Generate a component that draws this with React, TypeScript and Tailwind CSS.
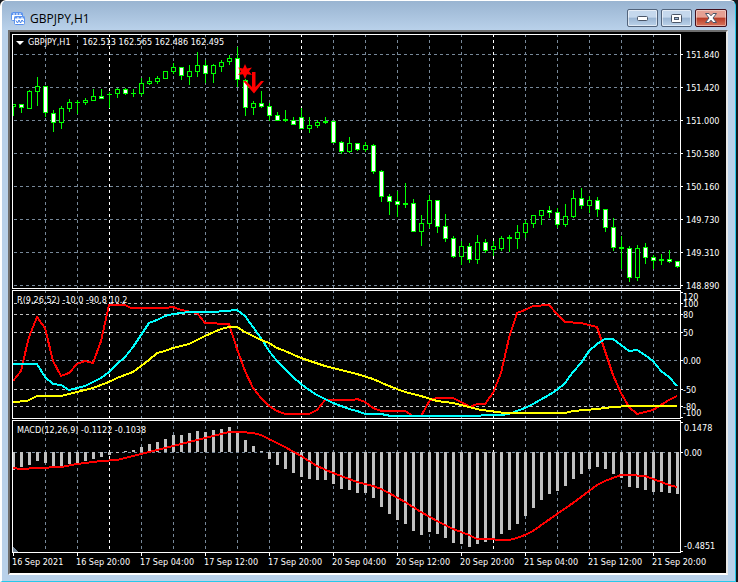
import type { ReactNode } from "react";

// high, body top, body bottom, low, 1 = bearish (filled)
type Candle = [number, number, number, number, number];
type Point = [number, number];

const FIRST_X = 13;
const STEP = 8;
const barX = (i: number) => FIRST_X + i * STEP;

const candles: Candle[] = [
  [104, 104, 106, 115, 0], [104, 104, 107, 112, 1], [90, 91, 108, 108, 0], [77, 86, 91, 105, 0],
  [86, 86, 112, 116, 1], [110, 113, 122, 131, 1], [106, 108, 122, 128, 0], [99, 102, 108, 111, 0],
  [100, 102, 102, 113, 0], [98, 100, 102, 104, 0], [89, 96, 100, 100, 0], [89, 96, 98, 98, 1],
  [92, 94, 94, 107, 0], [88, 89, 93, 97, 0], [88, 89, 93, 94, 1], [89, 93, 93, 96, 0],
  [78, 83, 93, 95, 0], [77, 81, 83, 84, 0], [76, 78, 81, 83, 0], [71, 71, 78, 78, 0],
  [63, 67, 71, 73, 0], [67, 67, 75, 79, 1], [65, 71, 76, 84, 0], [52, 65, 71, 76, 0],
  [60, 65, 73, 82, 1], [64, 65, 73, 82, 0], [60, 62, 66, 71, 0], [55, 58, 61, 64, 0],
  [47, 58, 79, 86, 1], [79, 80, 107, 115, 1], [101, 103, 107, 114, 0], [91, 103, 106, 107, 1],
  [103, 106, 115, 120, 1], [112, 115, 120, 120, 1], [110, 119, 120, 121, 0], [117, 120, 124, 124, 1],
  [108, 117, 128, 128, 1], [117, 125, 128, 132, 0], [120, 122, 125, 127, 0], [117, 121, 122, 123, 0],
  [121, 121, 142, 142, 1], [141, 142, 151, 153, 1], [137, 143, 151, 152, 0], [143, 143, 149, 150, 1],
  [142, 145, 149, 151, 0], [144, 145, 171, 173, 1], [170, 171, 196, 201, 1], [194, 196, 201, 214, 1],
  [191, 201, 204, 216, 1], [183, 203, 204, 207, 0], [199, 203, 231, 231, 1], [215, 223, 231, 245, 0],
  [195, 200, 223, 227, 0], [200, 200, 226, 232, 1], [214, 226, 238, 241, 1], [236, 238, 256, 257, 1],
  [241, 246, 256, 264, 0], [243, 246, 259, 262, 1], [235, 242, 259, 263, 0], [239, 242, 250, 252, 1],
  [241, 246, 249, 255, 0], [236, 238, 248, 250, 0], [235, 237, 238, 251, 0], [225, 232, 238, 248, 0],
  [220, 223, 232, 237, 0], [215, 215, 223, 227, 0], [210, 210, 215, 224, 0], [206, 210, 212, 217, 1],
  [208, 212, 224, 227, 1], [204, 216, 224, 226, 0], [190, 198, 216, 217, 0], [188, 198, 205, 208, 1],
  [196, 200, 205, 212, 0], [197, 200, 209, 216, 1], [209, 209, 227, 231, 1], [218, 227, 247, 250, 1],
  [236, 247, 248, 268, 0], [246, 248, 277, 281, 1], [245, 248, 277, 280, 0], [243, 247, 257, 263, 1],
  [255, 257, 260, 268, 1], [254, 259, 260, 264, 0], [250, 259, 261, 262, 1], [261, 261, 266, 267, 1],
];

const fastR: Point[] = [
  [13, 381], [21, 371], [23, 362], [29, 337], [37, 317], [45, 328], [53, 361], [61, 376], [69, 373],
  [77, 364], [85, 361], [93, 363], [101, 341], [109, 305], [125, 305], [131, 308], [165, 308], [173, 307],
  [181, 310], [197, 313], [205, 323], [229, 324], [237, 349], [245, 371], [253, 388], [261, 398],
  [269, 406], [277, 411], [285, 414], [309, 414], [317, 410], [325, 400], [353, 400], [357, 399],
  [365, 402], [373, 408], [381, 411], [405, 411], [413, 416], [421, 416], [430, 400], [437, 398],
  [453, 398], [461, 402], [470, 407], [477, 404], [485, 404], [493, 393], [501, 373], [509, 338],
  [517, 313], [525, 310], [533, 306], [549, 305], [557, 314], [565, 322], [581, 323], [597, 327],
  [605, 351], [613, 375], [621, 393], [629, 407], [637, 414], [645, 412], [653, 410], [661, 405],
  [669, 400], [677, 396],
];

const midR: Point[] = [
  [13, 364], [37, 364], [45, 377], [53, 384], [61, 385], [69, 390], [77, 388], [85, 386], [93, 382],
  [101, 378], [109, 372], [117, 364], [125, 357], [133, 347], [141, 335], [149, 323], [157, 320],
  [165, 316], [173, 314], [189, 312], [213, 312], [237, 310], [245, 316], [253, 327], [261, 338],
  [269, 351], [277, 361], [285, 369], [293, 377], [301, 384], [309, 390], [317, 395], [325, 399],
  [333, 403], [341, 406], [349, 409], [357, 411], [365, 414], [381, 414], [391, 416], [477, 416],
  [485, 415], [501, 415], [509, 414], [517, 411], [525, 408], [533, 404], [549, 395], [557, 390],
  [565, 383], [573, 372], [581, 363], [589, 351], [597, 344], [605, 339], [613, 339], [621, 345],
  [629, 351], [637, 350], [645, 355], [653, 361], [661, 371], [669, 377], [677, 386],
];

const slowR: Point[] = [
  [13, 402], [27, 401], [37, 396], [61, 396], [77, 392], [93, 388], [101, 385], [109, 382], [117, 378],
  [133, 372], [141, 366], [149, 360], [157, 353], [165, 351], [173, 348], [189, 344], [205, 336],
  [221, 329], [229, 327], [237, 327], [245, 332], [261, 340], [269, 343], [277, 348], [285, 351],
  [301, 358], [325, 366], [357, 374], [373, 379], [389, 386], [405, 392], [421, 396], [437, 401],
  [453, 403], [469, 407], [481, 410], [490, 411], [505, 413], [565, 413], [573, 411], [597, 409],
  [613, 407], [629, 406], [677, 406],
];

const MACD_ZERO = 452;
const macd = [
  470, 467, 465, 461, 463, 466, 466, 464, 463, 461, 459, 457, 455, 453, 451, 450, 447, 444, 442, 439, 435,
  435, 433, 431, 432, 430, 429, 427, 432, 440, 446, 451, 459, 465, 469, 473, 477, 479, 480, 480, 484, 489,
  490, 493, 493, 498, 507, 514, 520, 524, 531, 535, 532, 534, 538, 543, 544, 547, 544, 542, 539, 534, 530,
  524, 516, 508, 500, 494, 491, 486, 479, 474, 469, 467, 469, 474, 478, 487, 488, 490, 492, 492, 493, 494,
];

const signal: Point[] = [
  [13, 468], [21, 469], [37, 468], [61, 467], [77, 464], [101, 461], [117, 460], [133, 456], [149, 452],
  [165, 448], [181, 444], [197, 440], [213, 436], [229, 432], [241, 432], [253, 433], [261, 435],
  [269, 439], [285, 447], [301, 456], [317, 466], [333, 473], [349, 479], [357, 482], [373, 486],
  [381, 489], [389, 493], [405, 502], [421, 512], [437, 521], [453, 529], [469, 535], [477, 539],
  [493, 539], [497, 540], [509, 540], [517, 538], [525, 535], [533, 531], [557, 514], [573, 503],
  [589, 491], [597, 485], [605, 481], [613, 478], [621, 475], [629, 475], [645, 476], [653, 479],
  [661, 482], [669, 485], [677, 487],
];

const times = [
  "16 Sep 2021", "16 Sep 20:00", "17 Sep 04:00", "17 Sep 12:00", "17 Sep 20:00", "20 Sep 04:00",
  "20 Sep 12:00", "20 Sep 20:00", "21 Sep 04:00", "21 Sep 12:00", "21 Sep 20:00",
];

type Level = { y: number; label?: string; textY?: number; color?: string; line?: boolean };

const priceLevels: Level[] = [
  { y: 54, label: "151.840" }, { y: 87, label: "151.420" }, { y: 120, label: "151.000" },
  { y: 153, label: "150.580" }, { y: 186, label: "150.160" }, { y: 219, label: "149.730" },
  { y: 252, label: "149.310" }, { y: 285, label: "148.890" },
];

const rLevels: Level[] = [
  { y: 292, label: "120", textY: 300, line: false },
  { y: 303, label: "100", color: "#c0c0c0" },
  { y: 314, label: "80", color: "#c0c0c0" },
  { y: 332, label: "50", color: "#c0c0c0" },
  { y: 360, label: "0.00" },
  { y: 389, label: "-50", color: "#c0c0c0" },
  { y: 406, label: "-80", color: "#c0c0c0" },
  { y: 417, label: "-100", textY: 416, line: false },
];

const macdLevels: Level[] = [
  { y: 422, label: "0.1478", textY: 431, line: false },
  { y: 452, label: "0.00" },
  { y: 551, label: "-0.4851", textY: 549, line: false },
];

const gridX = Array.from({ length: 20 }, (_, i) => 45 + i * 32);
const dayBreaks = [109, 301, 493];

function Series({ points, color }: { points: Point[]; color: string }) {
  return (
    <polyline
      points={points.map((p) => p.join(",")).join(" ")}
      fill="none"
      stroke={color}
      strokeWidth={2}
      strokeLinejoin="round"
    />
  );
}

function Grid({ top, height, levels }: { top: number; height: number; levels: Level[] }) {
  return (
    <g strokeDasharray="3 3">
      {levels.filter((l) => l.line !== false).map((l) => (
        <line key={l.y} x1={14} x2={680} y1={l.y + 0.5} y2={l.y + 0.5} stroke={l.color ?? "#778899"} />
      ))}
      {gridX.map((x) => (
        <line
          key={x}
          x1={x + 0.5}
          x2={x + 0.5}
          y1={top - 1}
          y2={top + height}
          stroke={dayBreaks.includes(x) ? "#ffffff" : "#778899"}
        />
      ))}
    </g>
  );
}

type PanelProps = {
  title: string;
  top: number;
  height: number;
  levels: Level[];
  labelX: number;
  heightClass: string;
  header: ReactNode;
  children: ReactNode;
};

function Panel({ title, top, height, levels, labelX, heightClass, header, children }: PanelProps) {
  return (
    <section className={`flex ${heightClass}`}>
      <div className="relative min-w-0 flex-1 border border-white">
        <svg
          role="img"
          aria-label={title}
          className="block h-full w-full"
          viewBox={`13 ${top} 667 ${height}`}
          preserveAspectRatio="none"
          shapeRendering="crispEdges"
        >
          <Grid top={top} height={height} levels={levels} />
          {children}
        </svg>
        {header}
      </div>
      <svg
        className="w-[45px] shrink-0 overflow-visible text-[9px]"
        viewBox={`681 ${top - 1} 45 ${height + 2}`}
        shapeRendering="crispEdges"
      >
        {levels.map((l) => (
          <g key={l.y}>
            <rect x={681} y={l.y} width={2} height={1} fill="#fff" />
            <text x={labelX} y={l.textY ?? l.y + 4} fill="#fff">{l.label}</text>
          </g>
        ))}
      </svg>
    </section>
  );
}

function Candles() {
  return (
    <g>
      {candles.map(([high, open, close, low, down], i) => {
        const x = barX(i);
        const h = close - open + 1;
        return (
          <g key={x}>
            <rect x={x} y={high} width={1} height={low - high + 1} fill="#00ff00" />
            <rect x={x - 2} y={open} width={5} height={h} fill="#00ff00" />
            {h > 2 && (
              <rect x={x - 1} y={open + 1} width={3} height={h - 2} fill={down ? "#fff" : "#000"} />
            )}
          </g>
        );
      })}
    </g>
  );
}

function SellMark() {
  return (
    <g fill="#ff0000" shapeRendering="auto">
      <path d="M245 64 L247 68.500 L252 67.500 L249 71.300 L252 75 L247 74.300 L245 79 L243 74.300 L238 75 L241 71.300 L238 67.500 L243 68.500 Z" />
      <path d="M252 72h3.500v15l5.500-6h3L254 93.500L243 81h3l6 6z" />
    </g>
  );
}

function ChartIcon() {
  return (
    <svg className="size-4 shrink-0" viewBox="0 0 16 16" fill="none" aria-hidden="true">
      <rect x="1.5" y="1.5" width="11" height="8" rx="1" fill="#fff" stroke="#5b93ee" />
      <path d="M1.5 3h11" stroke="#5b93ee" strokeWidth="2" strokeDasharray="2 1" />
      <rect x="4.5" y="5.5" width="10" height="8" rx="1" fill="#fff" stroke="#5b93ee" />
      <path d="M4.5 6.5h10" stroke="#5b93ee" strokeWidth="2" strokeDasharray="3 1" />
      <path d="M6 9.500l1.500 2.500 1.500-3 1.500 3 1.500-3 1.500 2" stroke="#4482e8" />
    </svg>
  );
}

const captionButton =
  "flex h-[18px] w-[31px] items-center justify-center rounded-xs border border-[#52647c] bg-linear-to-b from-[#c5d8ed] from-45% via-[#9ab5d3] via-50% to-[#bcd3ea] shadow-[inset_0_0_0_1px_rgba(255,255,255,0.55)]";

function TitleBar() {
  return (
    <header className="flex h-[29px] items-center bg-linear-to-b from-[#99b4d1] to-[#b9d1ea] px-2 pt-1.5">
      <ChartIcon />
      <h1 className="ml-1 flex-1 font-['Open_Sans',sans-serif] text-[12px] text-black">GBPJPY,H1</h1>
      <div className="flex gap-[3px] pb-px">
        <button type="button" aria-label="Minimize" className={captionButton}>
          <svg width="11" height="5" viewBox="0 0 11 5">
            <rect x=".5" y=".5" width="10" height="4" rx="1" fill="#fff" stroke="#4b5668" />
          </svg>
        </button>
        <button type="button" aria-label="Maximize" className={captionButton}>
          <svg width="11" height="9" viewBox="0 0 11 9">
            <rect x=".5" y=".5" width="10" height="8" rx="1" fill="#fff" stroke="#4b5668" />
            <rect x="3.5" y="3.5" width="4" height="2" fill="#9ab5d3" stroke="#4b5668" />
          </svg>
        </button>
        <button
          type="button"
          aria-label="Close"
          className="flex h-[18px] w-8 items-center justify-center rounded-xs border border-[#43101d] bg-linear-to-b from-[#e5a093] from-45% via-[#b83a26] via-50% to-[#d8755c] shadow-[inset_0_0_0_1px_rgba(255,255,255,0.4)]"
        >
          <svg width="12" height="10" viewBox="0 0 12 10">
            <path d="M.5 .5h3.500L6 2.800L8 .5h3.500L8 5l3.500 4.500H8L6 7.200L4 9.500H.5L4 5z" fill="#fff" stroke="#4b5668" />
          </svg>
        </button>
      </div>
    </header>
  );
}

export default function App() {
  return (
    <div className="border-r-2 border-r-[#16181c] bg-[#16181c] font-['DejaVu_Sans_Condensed','DejaVu_Sans',sans-serif]">
      <main className="overflow-hidden rounded-t-md border-t border-r border-b border-l-2 border-t-white border-r-[#27c8ea] border-b-[#27c8ea] border-l-white bg-[#b9d1ea]">
        <TitleBar />
        <div className="mr-[7px] mb-[6px] ml-[6px] border-2 border-t-[#6d6d6d] border-r-[#e8e8e8] border-b-white border-l-[#6d6d6d] bg-black pt-[2px] pl-[2px] text-white">
          <div className="flex flex-col gap-px">
            <Panel
              title="Price"
              top={35}
              height={253}
              levels={priceLevels}
              labelX={686}
              heightClass="h-[255px]"
              header={
                <div className="absolute top-0 left-0 flex h-4 items-center pl-[3px] text-[9px] whitespace-nowrap">
                  <svg width="8" height="4" viewBox="0 0 8 4" aria-hidden="true">
                    <path d="M0 0h8L4 4z" fill="#fff" />
                  </svg>
                  <span className="ml-1">GBPJPY,H1</span>
                  <span className="ml-3">162.513 162.565 162.486 162.495</span>
                </div>
              }
            >
              <Candles />
              <SellMark />
            </Panel>
            <Panel
              title="R"
              top={291}
              height={127}
              levels={rLevels}
              labelX={683}
              heightClass="h-[129px]"
              header={<p className="absolute top-px left-1 text-[9px]/4 whitespace-nowrap">R(9,26,52) -10.0 -90.8 10.2</p>}
            >
              <Series points={fastR} color="#ff0000" />
              <Series points={midR} color="#00ffff" />
              <Series points={slowR} color="#ffff00" />
            </Panel>
            <Panel
              title="MACD"
              top={421}
              height={131}
              levels={macdLevels}
              labelX={684}
              heightClass="h-[133px]"
              header={<p className="absolute top-px left-1 text-[9px]/4 whitespace-nowrap">MACD(12,26,9) -0.1122 -0.1038</p>}
            >
              {macd.map((y, i) => (
                <rect
                  key={i}
                  x={barX(i) - 1}
                  y={Math.min(y, MACD_ZERO)}
                  width={3}
                  height={Math.abs(y - MACD_ZERO)}
                  fill="#c0c0c0"
                />
              ))}
              <Series points={signal} color="#ff0000" />
              <path d="M13 547v5h5z" fill="#778899" />
            </Panel>
          </div>
          <div className="flex h-5">
            {times.map((t) => (
              <div key={t} className="min-w-0 flex-1 last:w-[74px] last:flex-none">
                <div className="ml-px h-[3px] w-px bg-white" />
                <time className="block text-[9px]/3 whitespace-nowrap">{t}</time>
              </div>
            ))}
          </div>
        </div>
      </main>
    </div>
  );
}
